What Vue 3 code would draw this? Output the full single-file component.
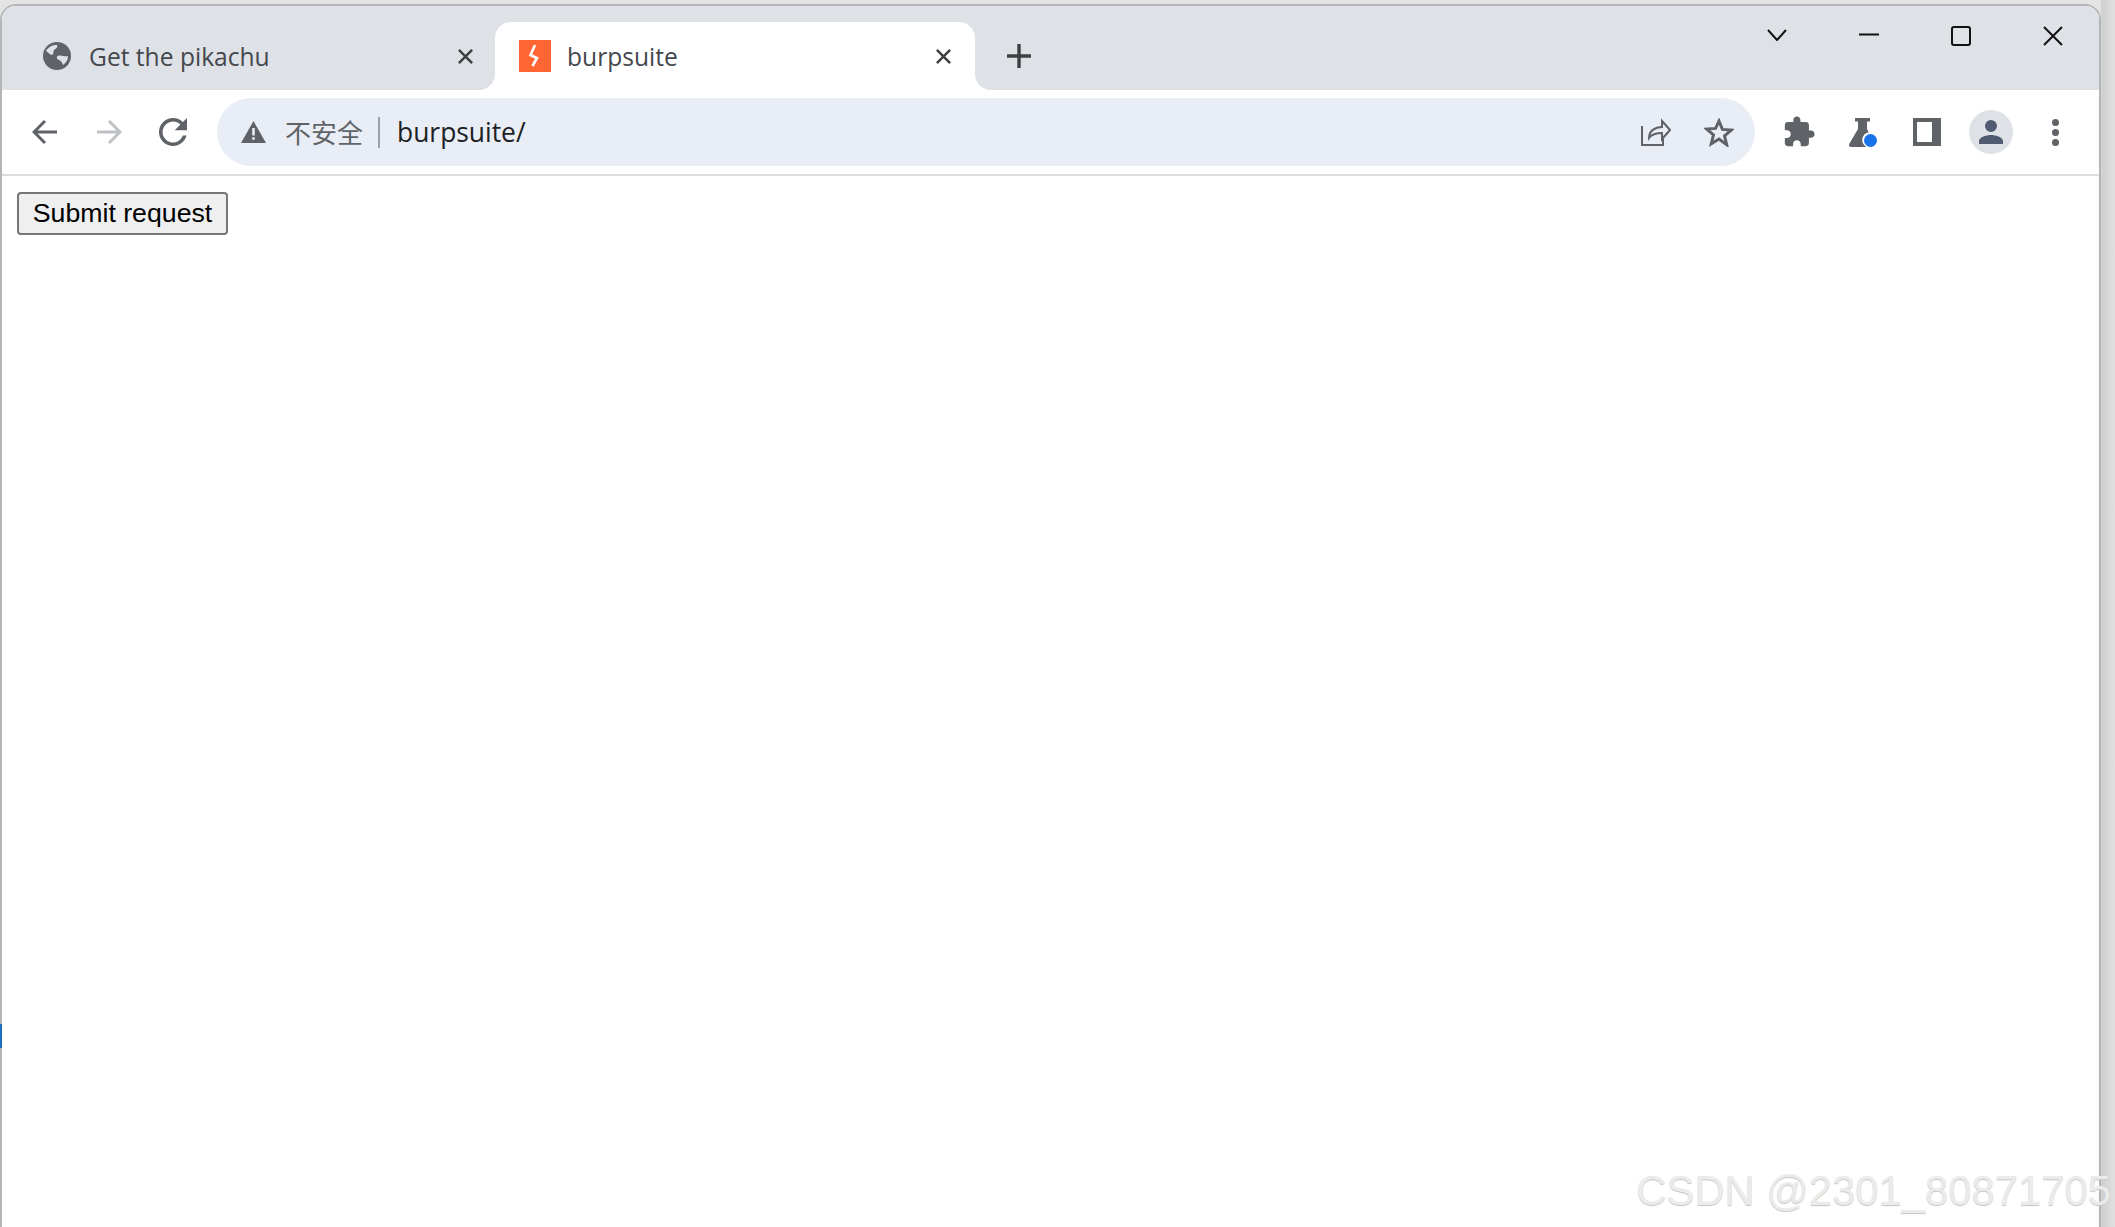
<template>
  <div class="screen">
    <div class="window">
      <!-- tab strip -->
      <div class="tabstrip">
        <div class="tab-inactive">
          <svg class="globe" viewBox="0 0 28 28">
            <circle cx="14" cy="14" r="14" fill="#5f6368" />
            <path d="M3 9c3-5 7-6 11-6 1 2-1 4-3 5-1 2 0 4-2 5-2 0-4-3-6-4z" fill="#dee1e6" />
            <path d="M25 14c0 4-2 7-5 9-1-3-2-4-4-5-3-1-3-4 0-4.500 3-.5 6 1.500 9 .5z" fill="#dee1e6" />
          </svg>
          <span class="tab-title">Get the pikachu</span>
          <svg class="tab-close" viewBox="0 0 18 18">
            <path d="M2 2l14 14M16 2L2 16" />
          </svg>
        </div>
        <div class="tab-active-wrap">
          <div class="tab-active">
            <svg class="favicon" viewBox="0 0 32 32">
              <rect width="32" height="32" fill="#ff6633" />
              <path d="M16 5l-4.500 10 6.500 3-4.500 8" fill="none" stroke="#fff" stroke-width="2.600" />
            </svg>
            <span class="tab-title">burpsuite</span>
            <svg class="tab-close" viewBox="0 0 18 18">
              <path d="M2 2l14 14M16 2L2 16" />
            </svg>
          </div>
        </div>
        <div class="tab-rest">
          <svg class="plus" viewBox="0 0 24 24">
            <path d="M12 1v22M1 12h22" />
          </svg>
          <div class="win-controls">
            <svg class="chevron" viewBox="0 0 20 12">
              <path d="M1 1l9 10 9-10" />
            </svg>
            <svg class="minimize" viewBox="0 0 20 3">
              <path d="M0 1.500h20" />
            </svg>
            <svg class="maximize" viewBox="0 0 20 20">
              <rect x="1" y="1" width="18" height="18" rx="2" />
            </svg>
            <svg class="win-close" viewBox="0 0 20 20">
              <path d="M1 1l18 18M19 1L1 19" />
            </svg>
          </div>
        </div>
      </div>

      <!-- toolbar -->
      <div class="toolbar">
        <svg class="nav back" viewBox="0 0 26 26">
          <path d="M25 13H3M13 2L2 13l11 11" />
        </svg>
        <svg class="nav forward" viewBox="0 0 26 26">
          <path d="M1 13h22M13 2l11 11-11 11" />
        </svg>
        <svg class="reload" viewBox="0 0 24 24">
          <path d="M17.650 6.350A7.960 7.960 0 0 0 12 4a8 8 0 1 0 7.730 10h-2.080A6 6 0 1 1 12 6c1.660 0 3.140.69 4.220 1.780L13 11h7V4l-2.350 2.350z" />
        </svg>
        <div class="omnibox">
          <svg class="warning" viewBox="0 0 25 22">
            <path d="M12.500 0L25 22H0z" fill="#5f6368" />
            <path d="M11.200 7h2.600v7.500h-2.600zM11.200 16.200h2.600v2.600h-2.600z" fill="#e9eef6" />
          </svg>
          <span class="insecure">不安全</span>
          <span class="sep"></span>
          <span class="url">burpsuite/</span>
          <svg class="share" viewBox="0 0 30 28">
            <path d="M1 8v19h21v-6M8 20c0-7 6-11 13-11V3l8 9-8 9v-6c-6 0-10 1-13 5z" />
          </svg>
          <svg class="star" viewBox="0 0 30 29">
            <path d="M15 3l3.400 8.400 9 .7-6.900 5.800 2.200 8.800L15 21l-7.700 4.700 2.200-8.800-6.900-5.800 9-.7z" />
          </svg>
        </div>
        <svg class="ext puzzle" viewBox="0 0 24 24">
          <path d="M20.500 11H19V7c0-1.100-.9-2-2-2h-4V3.500C13 2.120 11.880 1 10.500 1S8 2.120 8 3.500V5H4c-1.100 0-1.990.9-1.990 2v3.800H3.500c1.490 0 2.700 1.210 2.700 2.700s-1.210 2.700-2.700 2.700H2V20c0 1.100.9 2 2 2h3.800v-1.500c0-1.490 1.210-2.700 2.700-2.700 1.490 0 2.700 1.210 2.700 2.700V22H17c1.100 0 2-.9 2-2v-4h1.500c1.380 0 2.500-1.120 2.500-2.500S21.880 11 20.500 11z" />
        </svg>
        <svg class="ext flask" viewBox="0 0 28 29">
          <path d="M6 0h15v3.500h-3V11l7 14v4H2c-2 0-2.400-1.500-1.500-3.500L9 11V3.500H6z" fill="#5f6368" />
          <circle cx="21" cy="22" r="7.800" fill="#fff" />
          <circle cx="21.500" cy="22.500" r="6.500" fill="#1a73e8" />
        </svg>
        <div class="ext sidepanel"></div>
        <div class="avatar">
          <svg viewBox="0 0 24 24">
            <path d="M12 12a4 4 0 1 0 0-8 4 4 0 0 0 0 8zm0 2c-2.670 0-8 1.340-8 4v2h16v-2c0-2.660-5.330-4-8-4z" />
          </svg>
        </div>
        <div class="menu-dots">
          <span></span>
          <span></span>
          <span></span>
        </div>
      </div>

      <!-- page content -->
      <div class="content">
        <button class="submit">Submit request</button>
      </div>
    </div>

    <div class="edge-mark"></div>
    <div class="watermark">CSDN @2301_80871705</div>
  </div>
</template>

<script setup>
</script>

<style>
html,
body {
  margin: 0;
  overflow: hidden;
}
</style>

<style scoped>
.screen {
  position: relative;
  width: 2115px;
  height: 1227px;
  box-sizing: border-box;
  padding-top: 4px;
  background: linear-gradient(90deg, #e4e4e4 0, #e4e4e4 2100px, #cfcfcf 2102px, #e2e2e2 2115px);
  overflow: hidden;
}

.window {
  width: 2101px;
  height: 1223px;
  box-sizing: border-box;
  display: flex;
  flex-direction: column;
  border: 2px solid #b4b5b7;
  border-bottom: none;
  border-radius: 16px 16px 0 0;
  background: #fff;
  overflow: hidden;
}

/* tab strip */
.tabstrip {
  display: flex;
  height: 84px;
  flex: none;
  background: #fff;
  font-family: "Open Sans", "Noto Sans", sans-serif;
}

.tab-inactive {
  width: 493px;
  box-sizing: border-box;
  display: flex;
  align-items: center;
  padding: 16px 21px 0 41px;
  background: #dee1e6;
  border-bottom-right-radius: 16px;
}

.tab-active-wrap {
  width: 480px;
  padding-top: 16px;
  background: #dee1e6;
}

.tab-active {
  height: 68px;
  box-sizing: border-box;
  display: flex;
  align-items: center;
  padding: 0 23px 0 24px;
  background: #fff;
  border-radius: 16px 16px 0 0;
}

.tab-rest {
  flex: 1;
  display: flex;
  align-items: flex-start;
  padding-left: 32px;
  background: #dee1e6;
  border-bottom-left-radius: 16px;
}

.globe {
  width: 28px;
  height: 28px;
  flex: none;
  margin-right: 18px;
}

.favicon {
  width: 32px;
  height: 32px;
  flex: none;
  margin-right: 16px;
}

.tab-title {
  flex: 1;
  margin-top: 1px;
  font-size: 24.600px;
  color: #45484d;
  white-space: nowrap;
}

.tab-close {
  width: 17px;
  height: 17px;
  flex: none;
  fill: none;
  stroke: #3c4043;
  stroke-width: 2.600;
}

.plus {
  width: 24px;
  height: 24px;
  margin-top: 38px;
  fill: none;
  stroke: #3c4043;
  stroke-width: 3.400;
  stroke-linecap: round;
}

/* window buttons */
.win-controls {
  margin-left: auto;
  display: flex;
  align-items: center;
  height: 60px;
  gap: 72px;
  padding-right: 36px;
}

.win-controls svg {
  fill: none;
  stroke: #111;
  stroke-width: 2;
}

.chevron {
  width: 20px;
  height: 12px;
  margin: -2px 0 0 1px;
}

.minimize {
  width: 20px;
  height: 3px;
  margin-top: -3px;
}

.maximize {
  width: 20px;
  height: 20px;
}

.win-close {
  width: 20px;
  height: 20px;
}

/* toolbar */
.toolbar {
  flex: none;
  height: 86px;
  box-sizing: border-box;
  display: flex;
  align-items: center;
  padding-left: 30px;
  border-bottom: 2px solid #dadce0;
  background: #fff;
}

.nav {
  width: 26px;
  height: 26px;
  flex: none;
  fill: none;
  stroke-width: 3;
}

.back {
  stroke: #5f6368;
}

.forward {
  margin-left: 38px;
  stroke: #bdc1c6;
}

.reload {
  width: 42px;
  height: 42px;
  flex: none;
  margin-left: 30px;
  fill: #5f6368;
}

.omnibox {
  width: 1538px;
  height: 68px;
  flex: none;
  box-sizing: border-box;
  display: flex;
  align-items: center;
  margin-left: 23px;
  padding: 0 21px 0 24px;
  border-radius: 34px;
  background: #e9eef6;
  font-family: "Open Sans", "Noto Sans", "Noto Sans CJK SC", sans-serif;
}

.warning {
  width: 25px;
  height: 22px;
  flex: none;
}

.insecure {
  margin: -2px 0 0 19px;
  font-family: "Noto Sans CJK SC", sans-serif;
  font-size: 26px;
  color: #5f6368;
}

.sep {
  width: 2px;
  height: 31px;
  margin-left: 15px;
  background: #9aa0a6;
}

.url {
  flex: 1;
  margin-left: 17px;
  font-size: 26.400px;
  color: #202124;
}

.share {
  width: 30px;
  height: 28px;
  flex: none;
  fill: none;
  stroke: #5f6368;
  stroke-width: 2;
}

.star {
  width: 30px;
  height: 29px;
  flex: none;
  margin-left: 33px;
  fill: none;
  stroke: #5f6368;
  stroke-width: 3;
}

.ext {
  flex: none;
}

.puzzle {
  width: 34px;
  height: 34px;
  margin-left: 27px;
  fill: #5f6368;
}

.flask {
  width: 28px;
  height: 29px;
  margin-left: 33px;
}

.sidepanel {
  width: 28px;
  height: 28px;
  box-sizing: border-box;
  margin-left: 36px;
  border: 4px solid #5f6368;
  border-right-width: 9px;
}

.avatar {
  width: 44px;
  height: 44px;
  flex: none;
  display: flex;
  align-items: center;
  justify-content: center;
  margin-left: 28px;
  border-radius: 50%;
  background: #dee1e6;
}

.avatar svg {
  width: 36px;
  height: 36px;
  fill: #505a70;
}

.menu-dots {
  flex: none;
  display: flex;
  flex-direction: column;
  gap: 3px;
  margin-left: 39px;
}

.menu-dots span {
  width: 7px;
  height: 7px;
  border-radius: 50%;
  background: #5f6368;
}

/* page content */
.content {
  flex: 1;
  padding: 16px 15px;
  background: #fff;
}

.submit {
  width: 211px;
  height: 43px;
  padding: 0;
  box-sizing: border-box;
  border: 2px solid #767676;
  border-radius: 4px;
  background: #efefef;
  font-family: "Liberation Sans", Arial, sans-serif;
  font-size: 26.700px;
  color: #000;
}

.edge-mark {
  position: absolute;
  left: 0;
  top: 1024px;
  width: 2px;
  height: 24px;
  background: #1e6fc0;
}

.watermark {
  position: absolute;
  right: 4px;
  bottom: 11px;
  font-family: "Liberation Sans", Arial, sans-serif;
  font-size: 41.800px;
  line-height: 50px;
  color: #ebebeb;
  text-shadow: 0 1px 1px #c4c4c4;
  white-space: nowrap;
}
</style>
